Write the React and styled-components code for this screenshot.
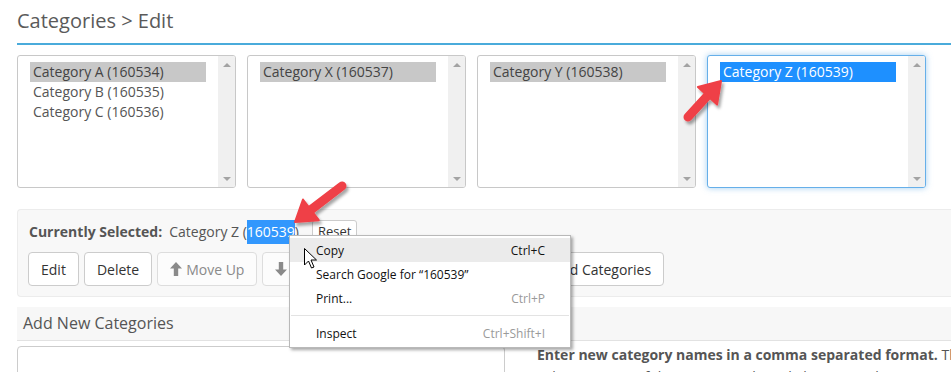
import React from "react";
import styled, { createGlobalStyle } from "styled-components";

const GlobalStyle = createGlobalStyle`
    body {
        margin: 0;
        background: #ffffff;
        font-family: "Open Sans", "Noto Sans", sans-serif;
        color: #555;
        overflow: hidden;
    }
`;

const lists = [
    [{ label: "Category A (160534)", state: "idle" }, { label: "Category B (160535)" }, { label: "Category C (160536)" }],
    [{ label: "Category X (160537)", state: "idle" }],
    [{ label: "Category Y (160538)", state: "idle" }],
    [{ label: "Category Z (160539)", state: "active" }],
];

function RedArrow({ x1, y1, x2, y2 }) {
    const len = Math.hypot(x2 - x1, y2 - y1);
    const ux = (x2 - x1) / len;
    const uy = (y2 - y1) / len;
    const nx = -uy;
    const ny = ux;
    const bx = x2 - ux * 20;
    const by = y2 - uy * 20;
    const head = `${x2},${y2} ${bx + nx * 13},${by + ny * 13} ${bx - nx * 13},${by - ny * 13}`;
    return (
        <g>
            <line x1={x1} y1={y1} x2={bx + ux * 3} y2={by + uy * 3} stroke="#ef4046" strokeWidth="9" strokeLinecap="round" />
            <polygon points={head} fill="#ef4046" strokeLinejoin="round" stroke="#ef4046" strokeWidth="2" />
        </g>
    );
}

function ArrowIcon({ down }) {
    return (
        <svg width="12" height="14" viewBox="0 0 12 14" style={down ? { transform: "rotate(180deg)" } : undefined}>
            <path d="M6 0 L12 6.5 L8.2 6.5 L8.2 14 L3.8 14 L3.8 6.5 L0 6.5 Z" fill="currentColor" />
        </svg>
    );
}

function ListBox({ items, focused }) {
    return (
        <Box $focused={focused}>
            <Options>
                {items.map((item) => (
                    <Option key={item.label} $state={item.state}>{item.label}</Option>
                ))}
            </Options>
            <Scrollbar>
                <ScrollArrow />
                <ScrollArrow $down />
            </Scrollbar>
        </Box>
    );
}

export default function App() {
    return (
        <>
            <GlobalStyle />
            <Page>
                <Title>Categories &gt; Edit</Title>

                <ListRow>
                    {lists.map((items, i) => (
                        <ListBox key={i} items={items} focused={i === 3} />
                    ))}
                </ListRow>

                <Toolbar>
                    <SelectedLine>
                        <strong>Currently Selected:</strong>
                        <Current>
                            Category Z (<Highlight>160539</Highlight>)
                        </Current>
                        <SmallButton>Reset</SmallButton>
                    </SelectedLine>
                    <ButtonRow>
                        <Button>Edit</Button>
                        <Button>Delete</Button>
                        <Button disabled><ArrowIcon /> Move Up</Button>
                        <Button disabled><ArrowIcon down /> Move Down</Button>
                        <Button>Sort Alphabetically</Button>
                        <Button>Add Categories</Button>
                    </ButtonRow>
                </Toolbar>

                <AddPanel>
                    <AddHeading>Add New Categories</AddHeading>
                    <AddBody>
                        <TextArea />
                        <Help>
                            <strong>Enter new category names in a comma separated format.</strong> They will be added as
                            sub-categories of the category selected above. New lines are ignored.
                        </Help>
                    </AddBody>
                </AddPanel>

                <ContextMenu>
                    <MenuItem $hover>
                        <span>Copy</span>
                        <Shortcut $dark>Ctrl+C</Shortcut>
                    </MenuItem>
                    <MenuItem>
                        <span>Search Google for “160539”</span>
                    </MenuItem>
                    <MenuItem>
                        <span>Print...</span>
                        <Shortcut>Ctrl+P</Shortcut>
                    </MenuItem>
                    <Separator />
                    <MenuItem>
                        <span>Inspect</span>
                        <Shortcut>Ctrl+Shift+I</Shortcut>
                    </MenuItem>
                </ContextMenu>

                <Cursor width="13" height="21" viewBox="0 0 13 21">
                    <path d="M0.5 0.5 L0.5 17 L4.5 13 L7.5 20 L10 19 L7 12 L12.5 12 Z" fill="#fff" stroke="#000" strokeWidth="1" strokeLinejoin="round" />
                </Cursor>

                <Overlay width="951" height="372">
                    <defs>
                        <filter id="shadow" x="-20%" y="-20%" width="160%" height="160%">
                            <feDropShadow dx="2" dy="3" stdDeviation="1.6" floodColor="#000" floodOpacity="0.35" />
                        </filter>
                    </defs>
                    <g filter="url(#shadow)">
                        <RedArrow x1={688} y1={117} x2={721} y2={81} />
                        <RedArrow x1={342} y1={186} x2={295} y2={222} />
                    </g>
                </Overlay>
            </Page>
        </>
    );
}

const Page = styled.div`
    position: relative;
    width: 960px;
    padding-left: 17px;
    height: 372px;
    overflow: hidden;
`;

const Title = styled.h1`
    margin: 0;
    height: 45px;
    box-sizing: border-box;
    padding-top: 7px;
    font-size: 20px;
    font-weight: 400;
    color: #5a5a5a;
    border-bottom: 2px solid #4aabdb;
`;

const ListRow = styled.div`
    display: flex;
    gap: 11px;
    margin-top: 10px;
`;

const Box = styled.div`
    width: 219px;
    height: 133px;
    box-sizing: border-box;
    display: flex;
    background: #fff;
    border: 1px solid ${(p) => (p.$focused ? "#66afe9" : "#c8c8c8")};
    border-radius: 3px;
    box-shadow: ${(p) => (p.$focused ? "0 0 6px rgba(102, 175, 233, 0.6)" : "none")};
    overflow: hidden;
`;

const Options = styled.div`
    flex: 1;
    padding: 6px 12px;
`;

const Option = styled.div`
    height: 20px;
    line-height: 20px;
    padding-left: 3px;
    font-size: 14px;
    color: ${(p) => (p.$state === "active" ? "#fff" : p.$state === "idle" ? "#444" : "#555")};
    background: ${(p) => (p.$state === "active" ? "#1e90ff" : p.$state === "idle" ? "#c8c8c8" : "transparent")};
`;

const Scrollbar = styled.div`
    width: 17px;
    background: #f0f0f0;
    display: flex;
    flex-direction: column;
    justify-content: space-between;
    align-items: center;
    padding: 7px 0 6px;
`;

const ScrollArrow = styled.div`
    width: 0;
    height: 0;
    border-left: 4px solid transparent;
    border-right: 4px solid transparent;
    ${(p) => (p.$down ? "border-top: 4px solid #a3a3a3;" : "border-bottom: 4px solid #a3a3a3;")}
`;

const Toolbar = styled.div`
    margin-top: 21px;
    background: #f8f8f8;
    border: 1px solid #ececec;
    border-right: none;
    border-radius: 4px 0 0 4px;
    padding: 10px 10px;
`;

const SelectedLine = styled.div`
    display: flex;
    align-items: center;
    height: 22px;
    font-size: 14px;
    padding-left: 1px;

    strong {
        font-weight: 700;
        color: #555;
    }
`;

const Current = styled.span`
    margin-left: 7px;
    color: #555;
`;

const Highlight = styled.span`
    background: #3297fd;
    color: #fff;
    padding: 2px 0 3px;
`;

const SmallButton = styled.button`
    margin-left: 13px;
    height: 22px;
    padding: 0 5px;
    font-family: inherit;
    font-size: 13px;
    color: #333;
    background: #fff;
    border: 1px solid #ccc;
    border-radius: 3px;
`;

const ButtonRow = styled.div`
    display: flex;
    gap: 5px;
    margin-top: 10px;
`;

const Button = styled.button`
    height: 34px;
    padding: 0 12px;
    display: flex;
    align-items: center;
    gap: 4px;
    font-family: inherit;
    font-size: 14px;
    color: #333;
    background: #fff;
    border: 1px solid #ccc;
    border-radius: 4px;

    &:disabled {
        color: #8a8a8a;
        background: #fcfcfc;
        border-color: #ddd;
    }
`;

const AddPanel = styled.div`
    margin-top: 10px;
`;

const AddHeading = styled.div`
    height: 33px;
    line-height: 33px;
    padding-left: 6px;
    font-size: 16px;
    color: #555;
    background: #f7f7f7;
    border-bottom: 1px solid #e2e2e2;
`;

const AddBody = styled.div`
    display: flex;
    margin-top: 5px;
`;

const TextArea = styled.div`
    width: 488px;
    height: 110px;
    box-sizing: border-box;
    border: 1px solid #ccc;
    border-radius: 4px;
    flex-shrink: 0;
`;

const Help = styled.p`
    margin: -2px 0 0;
    padding-left: 32px;
    font-size: 14px;
    line-height: 22px;
    color: #555;
    width: 560px;
    flex-shrink: 0;

    strong {
        font-weight: 700;
    }
`;

const ContextMenu = styled.div`
    position: absolute;
    left: 289px;
    top: 235px;
    width: 282px;
    box-sizing: border-box;
    padding: 2px 0;
    background: #fff;
    border: 1px solid #b9b9b9;
    box-shadow: 2px 2px 3px rgba(0, 0, 0, 0.35);
    font-family: "Open Sans", "Noto Sans", sans-serif;
    font-size: 12px;
    color: #111;
`;

const MenuItem = styled.div`
    height: 24px;
    display: flex;
    align-items: center;
    justify-content: space-between;
    padding: 0 25px 0 26px;
    background: ${(p) => (p.$hover ? "#ebebeb" : "transparent")};
`;

const Shortcut = styled.span`
    color: ${(p) => (p.$dark ? "#111" : "#9a9a9a")};
`;

const Separator = styled.div`
    height: 1px;
    margin: 5px 1px;
    background: #e3e3e3;
`;

const Cursor = styled.svg`
    position: absolute;
    left: 304px;
    top: 248px;
`;

const Overlay = styled.svg`
    position: absolute;
    left: 0;
    top: 0;
    pointer-events: none;
`;
